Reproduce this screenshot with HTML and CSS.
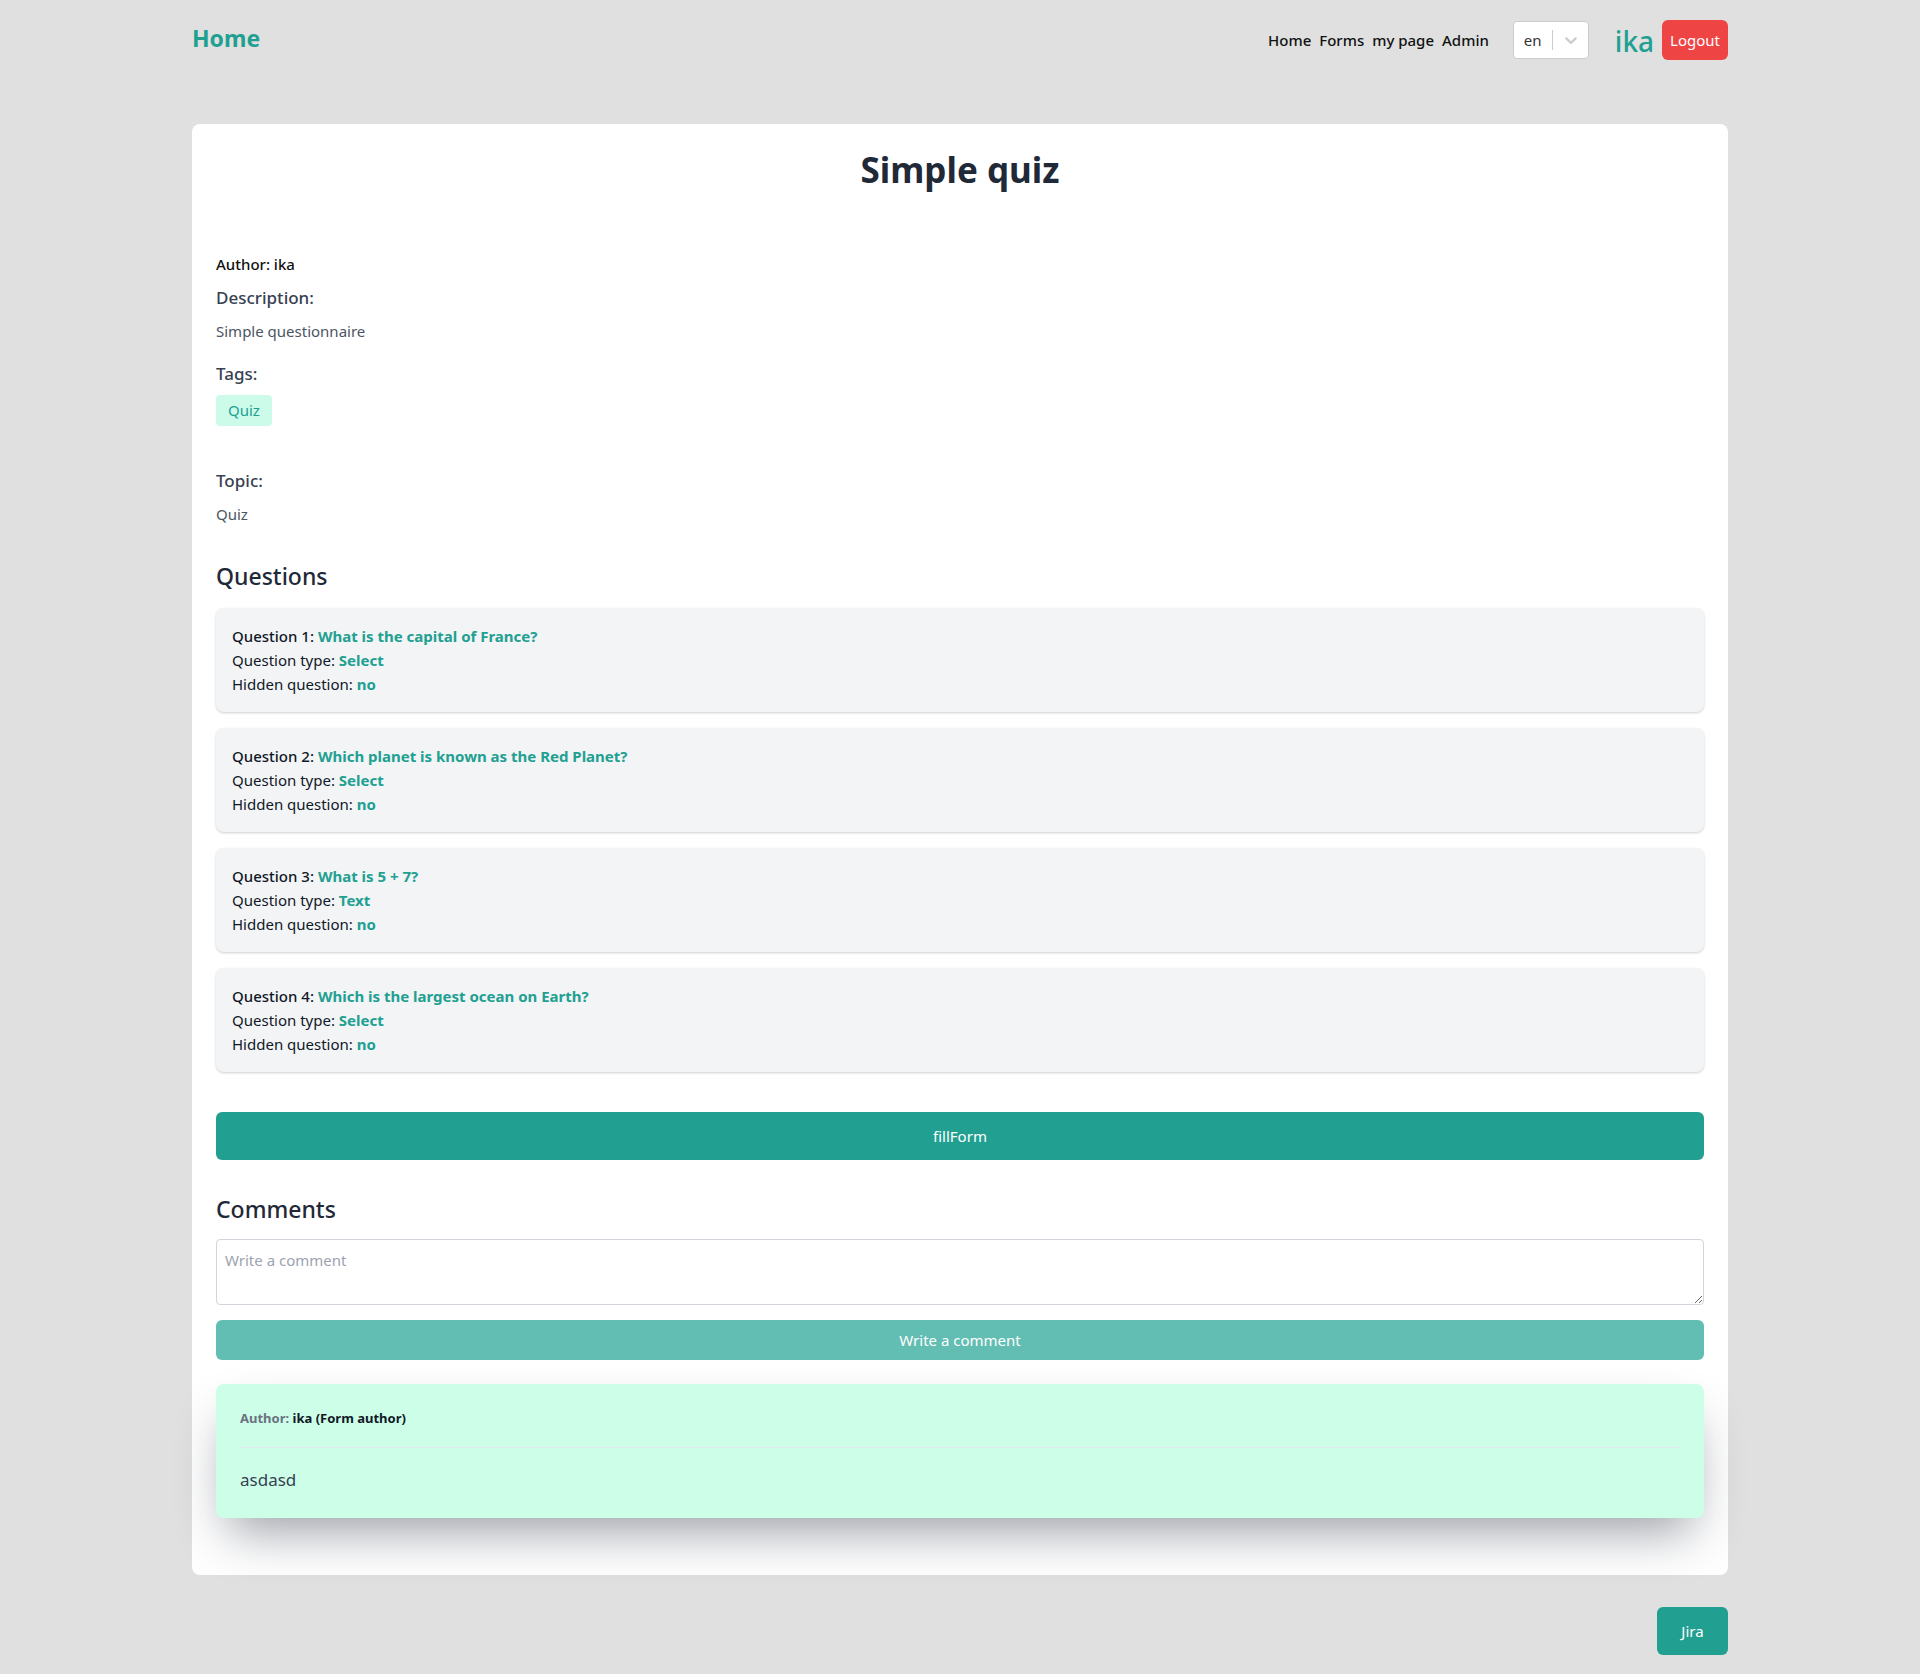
FILE: index.html
```html
<!DOCTYPE html>
<html lang="en">
<head>
<meta charset="utf-8">
<title>Simple quiz</title>
<link rel="stylesheet" href="styles.css">
</head>
<body>
<div class="container">
  <header class="topbar">
    <a class="brand" href="#">Home</a>
    <div class="right">
      <nav class="nav">
        <a href="#">Home</a>
        <a href="#">Forms</a>
        <a href="#">my page</a>
        <a href="#">Admin</a>
      </nav>
      <div class="lang">
        <span class="lang-value">en</span>
        <span class="lang-sep"></span>
        <svg class="lang-chev" width="20" height="20" viewBox="0 0 20 20"><path d="M4.516 7.548c.436-.446 1.043-.481 1.576 0L10 11.295l3.908-3.747c.533-.481 1.141-.446 1.574 0 .436.445.408 1.197 0 1.615-.406.418-4.695 4.502-4.695 4.502a1.095 1.095 0 0 1-1.576 0S4.924 9.581 4.516 9.163c-.409-.418-.436-1.170 0-1.615z" fill="#cccccc"/></svg>
      </div>
      <span class="user">ika</span>
      <button class="logout">Logout</button>
    </div>
  </header>

  <main class="card">
    <h1 class="title">Simple quiz</h1>

    <section class="meta">
      <p class="author">Author: ika</p>
      <h3 class="label">Description:</h3>
      <p class="value">Simple questionnaire</p>
      <h3 class="label tags-label">Tags:</h3>
      <div class="tags"><span class="tag">Quiz</span></div>
      <h3 class="label topic-label">Topic:</h3>
      <p class="value">Quiz</p>
    </section>

    <h2 class="section-title">Questions</h2>
    <div class="questions">
      <div class="q">
        <div><span class="q-num">Question 1:</span> <span class="hl">What is the capital of France?</span></div>
        <div>Question type: <span class="hl">Select</span></div>
        <div>Hidden question: <span class="hl">no</span></div>
      </div>
      <div class="q">
        <div><span class="q-num">Question 2:</span> <span class="hl">Which planet is known as the Red Planet?</span></div>
        <div>Question type: <span class="hl">Select</span></div>
        <div>Hidden question: <span class="hl">no</span></div>
      </div>
      <div class="q">
        <div><span class="q-num">Question 3:</span> <span class="hl">What is 5 + 7?</span></div>
        <div>Question type: <span class="hl">Text</span></div>
        <div>Hidden question: <span class="hl">no</span></div>
      </div>
      <div class="q">
        <div><span class="q-num">Question 4:</span> <span class="hl">Which is the largest ocean on Earth?</span></div>
        <div>Question type: <span class="hl">Select</span></div>
        <div>Hidden question: <span class="hl">no</span></div>
      </div>
    </div>

    <button class="fill">fillForm</button>

    <h2 class="section-title comments-title">Comments</h2>
    <textarea class="comment-input" placeholder="Write a comment"></textarea>
    <button class="write" disabled>Write a comment</button>

    <div class="comment">
      <div class="comment-head"><span class="c-label">Author:</span> <span class="c-name">ika (Form author)</span></div>
      <div class="comment-body">asdasd</div>
    </div>
  </main>

  <div class="footer">
    <button class="jira">Jira</button>
  </div>
</div>
</body>
</html>
```

FILE: styles.css
```css
* { box-sizing: border-box; }
html, body { margin: 0; padding: 0; }
body {
  background: #e0e0e0;
  font-family: "Noto Sans", "Open Sans", sans-serif;
  color: #1f2937;
}
.container {
  width: 1536px;
  margin: 0 auto;
}
.topbar {
  height: 80px;
  display: flex;
  align-items: center;
  justify-content: space-between;
}
.brand {
  color: #21a092;
  font-size: 23px;
  font-weight: 700;
  text-decoration: none;
  margin-bottom: 4px;
}
.right {
  display: flex;
  align-items: center;
}
.nav {
  display: flex;
  gap: 8px;
  margin-right: 24px;
}
.nav a {
  color: #111;
  text-decoration: none;
  font-size: 15px;
  font-weight: 500;
}
.lang {
  width: 76px;
  height: 38px;
  background: #fff;
  border: 1px solid #cccccc;
  border-radius: 4px;
  display: flex;
  align-items: center;
  padding-left: 10px;
  margin-right: 26px;
}
.lang-value {
  font-size: 15px;
  color: #333;
  width: 28px;
}
.lang-sep {
  width: 1px;
  height: 20px;
  background: #cccccc;
  margin-right: 8px;
}
.user {
  color: #21a092;
  font-size: 28px;
  font-weight: 500;
  margin-right: 8px;
  line-height: 1;
  margin-top: 2px;
}
.logout {
  background: #ef4444;
  color: #fff;
  border: none;
  border-radius: 6px;
  height: 40px;
  padding: 0 8px;
  font-family: inherit;
  font-size: 15px;
}

.card {
  margin-top: 44px;
  background: #fff;
  border-radius: 8px;
  padding: 24px 24px 57px;
}
.title {
  margin: 0;
  text-align: center;
  font-size: 35px;
  line-height: 44px;
  font-weight: 700;
  color: #1f2937;
}
.meta { margin-top: 62px; }
.author {
  margin: 0;
  font-size: 15px;
  line-height: 20px;
  font-weight: 500;
  color: #111;
}
.label {
  margin: 12px 0 0;
  font-size: 17px;
  line-height: 24px;
  font-weight: 500;
  color: #374151;
}
.value {
  margin: 11px 0 0;
  font-size: 15px;
  line-height: 20px;
  color: #4b5563;
}
.tags-label { margin-top: 21px; }
.tags { margin-top: 9px; display: flex; }
.tag {
  background: #ccfbe9;
  color: #21a092;
  font-size: 15px;
  height: 31px;
  line-height: 31px;
  padding: 0 12px;
  border-radius: 4px;
}
.topic-label { margin-top: 43px; }

.section-title {
  margin: 36px 0 0;
  font-size: 23px;
  line-height: 32px;
  font-weight: 500;
  color: #1f2937;
}
.questions {
  margin-top: 16px;
  display: flex;
  flex-direction: column;
  gap: 16px;
}
.q {
  background: #f3f4f6;
  border-radius: 8px;
  padding: 16px;
  font-size: 15px;
  line-height: 24px;
  color: #111827;
  box-shadow: 0 1px 3px rgba(0,0,0,0.12), 0 1px 2px rgba(0,0,0,0.08);
}
.q-num { font-weight: 500; }
.hl { color: #21a092; font-weight: 700; }

.fill {
  display: block;
  width: 100%;
  margin-top: 40px;
  height: 48px;
  border: none;
  border-radius: 6px;
  background: #21a092;
  color: #fff;
  font-family: inherit;
  font-size: 15px;
}
.comments-title { margin-top: 33px; }
.comment-input {
  display: block;
  width: 100%;
  height: 66px;
  margin-top: 14px;
  border: 1px solid #d1d5db;
  border-radius: 4px;
  padding: 10px 8px;
  font-family: inherit;
  font-size: 15px;
  color: #111;
  resize: vertical;
}
.comment-input::placeholder { color: #9ca3af; }
.write {
  display: block;
  width: 100%;
  margin-top: 15px;
  height: 40px;
  border: none;
  border-radius: 6px;
  background: #62bdb3;
  color: #fff;
  font-family: inherit;
  font-size: 15px;
}
.comment {
  margin-top: 24px;
  background: #ccfee8;
  border-radius: 8px;
  padding: 24px 24px 24px;
  box-shadow: 0 25px 50px -12px rgba(31,41,55,0.45);
}
.comment-head {
  font-size: 13px;
  line-height: 20px;
  font-weight: 700;
  padding-bottom: 19px;
  border-bottom: 1px solid #e5e7eb;
}
.c-label { color: #6b7280; }
.c-name { color: #111827; }
.comment-body {
  padding-top: 18px;
  font-size: 17px;
  line-height: 28px;
  color: #374151;
}
.footer {
  display: flex;
  justify-content: flex-end;
  margin-top: 32px;
  padding-bottom: 21px;
}
.jira {
  width: 71px;
  height: 48px;
  border: none;
  border-radius: 6px;
  background: #21a092;
  color: #fff;
  font-family: inherit;
  font-size: 15px;
}
```
